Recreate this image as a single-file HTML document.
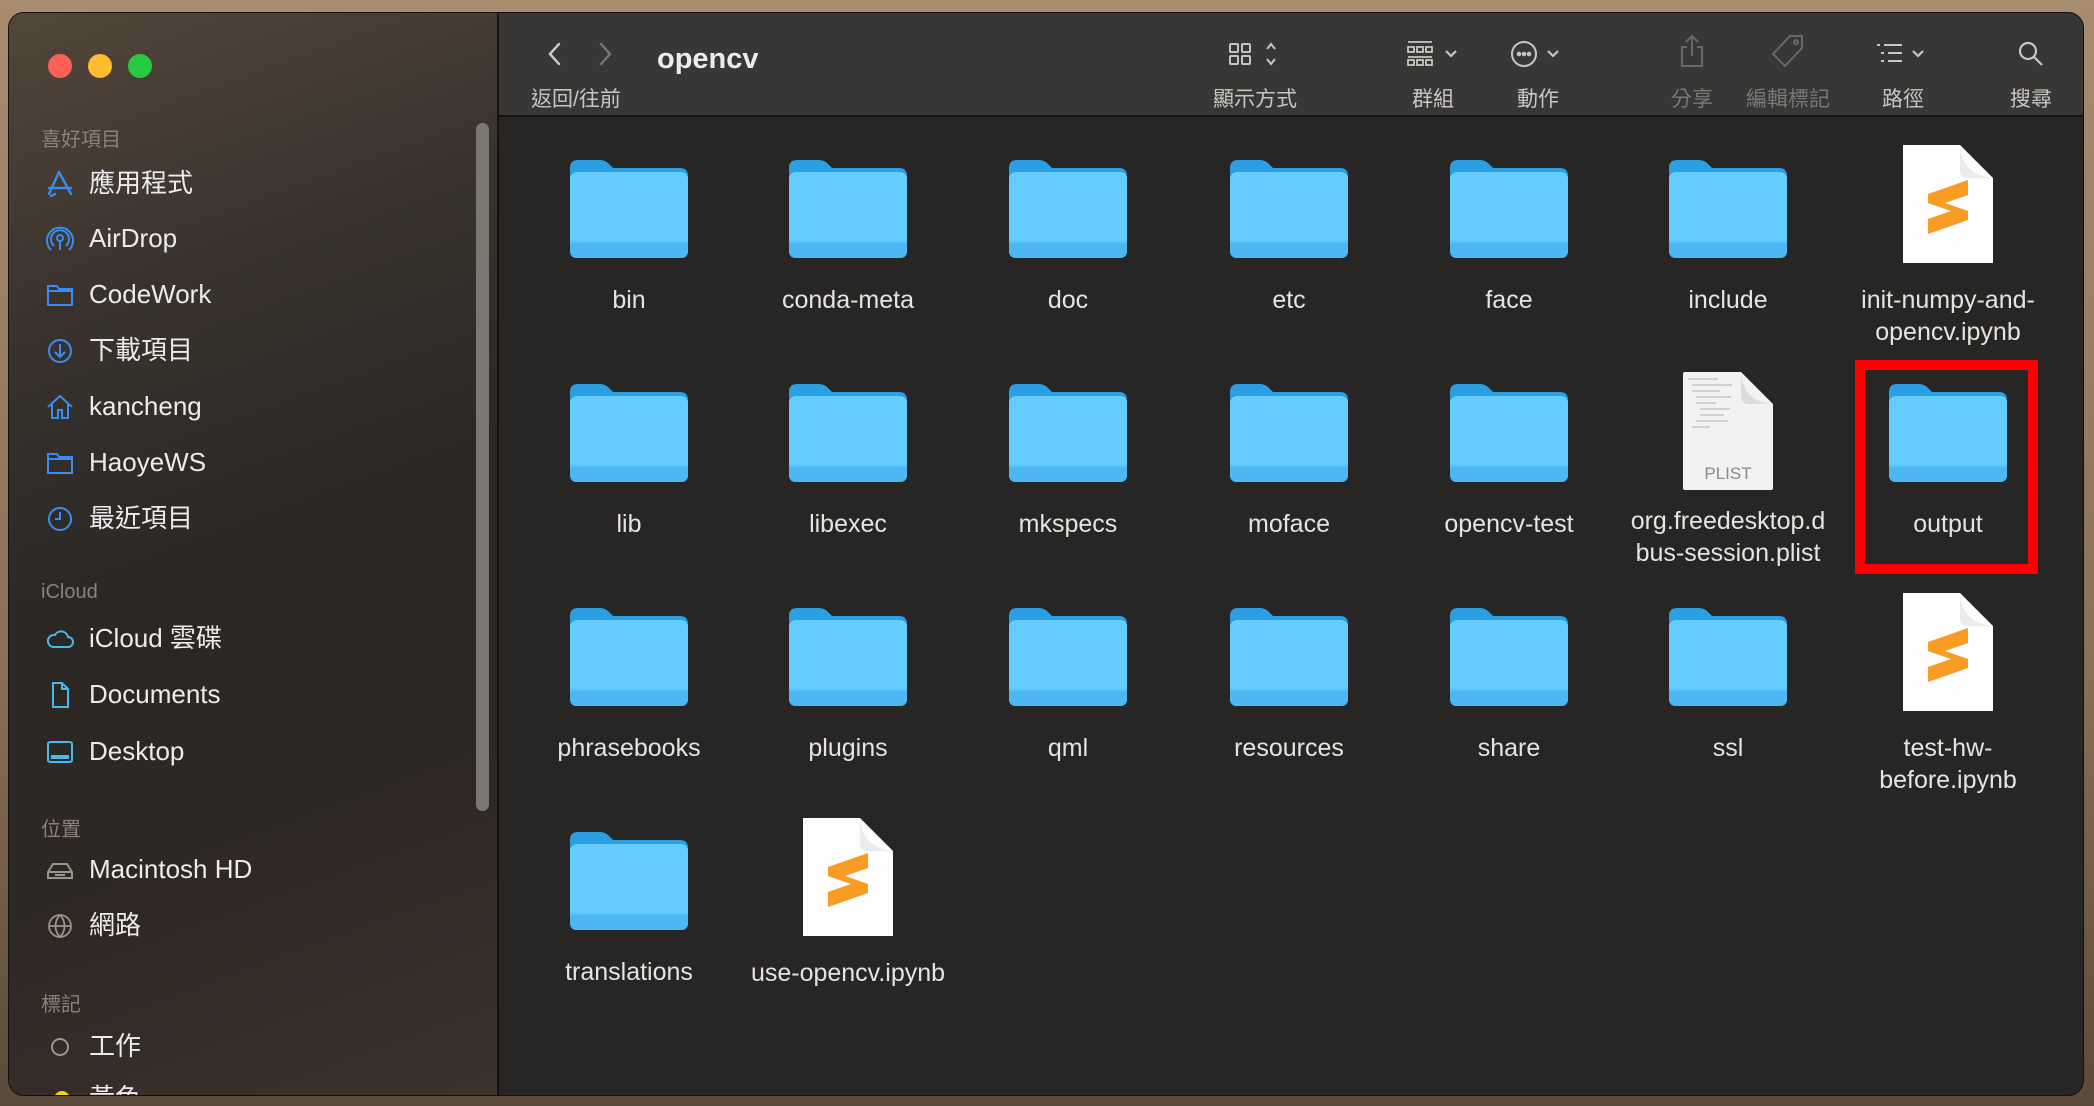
<!DOCTYPE html>
<html><head><meta charset="utf-8">
<style>
*{margin:0;padding:0;box-sizing:border-box}
html,body{width:2094px;height:1106px;overflow:hidden}
body{background:linear-gradient(180deg,#a88c70 0%,#8a7058 60%,#5a4a3a 100%);font-family:"Liberation Sans","Noto Sans CJK TC",sans-serif;position:relative}
.win{position:absolute;left:8px;top:12px;width:2076px;height:1084px;border-radius:16px;overflow:hidden;background:#282624;border:1px solid #111}
.side{position:absolute;left:0;top:0;width:490px;height:100%;background:linear-gradient(160deg,#53463a 0%,#3a332d 25%,#2a2725 50%,#2f2825 75%,#3b322b 100%);border-right:2px solid #141312}
.tl{position:absolute;top:41px;width:24px;height:24px;border-radius:50%}
.sh{position:absolute;left:32px;font-size:20px;color:#8a817a}
.it{position:absolute;left:80px;font-size:26px;color:#ececec;line-height:30px}
.ic{position:absolute;left:36px;width:30px;height:30px}
.tb{position:absolute;left:482px;top:0;right:0;height:104px}
.tbbg{position:absolute;left:490px;top:0;right:0;height:104px;background:#393735;border-bottom:2px solid #141312}
.lbl{position:absolute;top:70px;font-size:21px;color:#c8c6c4;transform:translateX(-50%);white-space:nowrap}
.dim{color:#7a7876}
.ti{position:absolute;top:26px;transform:translateX(-50%)}
.cell{position:absolute;width:240px;text-align:center;font-size:25px;color:#e6e4e2;line-height:32px}
.cell svg{display:block;margin:0 auto}
</style></head><body>
<div class="win">
 <div class="side">
  <div class="tl" style="left:39px;background:#fe5f57"></div>
  <div class="tl" style="left:79px;background:#febc2e"></div>
  <div class="tl" style="left:119px;background:#28c840"></div>
  <div style="position:absolute;left:467px;top:110px;width:13px;height:688px;border-radius:7px;background:#7b7874"></div>

  <div class="sh" style="top:110px">喜好項目</div>
  <svg class="ic" style="top:156px" viewBox="0 0 30 30" fill="none" stroke="#3a8cf0" stroke-width="2.4" stroke-linecap="round"><path d="M14 3l-10 22M14 3l12 22M4 19h22M10 25l-4 2"/></svg>
  <div class="it" style="top:155px">應用程式</div>
  <svg class="ic" style="top:211px" viewBox="0 0 30 30" fill="none" stroke="#3a8cf0" stroke-width="2"><circle cx="15" cy="14" r="3"/><path d="M9 22a9 9 0 1 1 12 0M6 26a13 13 0 1 1 18 0M15 17v9"/></svg>
  <div class="it" style="top:210px">AirDrop</div>
  <svg class="ic" style="top:267px" viewBox="0 0 30 30" fill="none" stroke="#3a8cf0" stroke-width="2"><path d="M3 6h9l2 3h13v16H3zM3 11h24"/></svg>
  <div class="it" style="top:266px">CodeWork</div>
  <svg class="ic" style="top:323px" viewBox="0 0 30 30" fill="none" stroke="#3a8cf0" stroke-width="2"><circle cx="15" cy="15" r="11"/><path d="M15 8v13M10 16l5 5 5-5"/></svg>
  <div class="it" style="top:322px">下載項目</div>
  <svg class="ic" style="top:379px" viewBox="0 0 30 30" fill="none" stroke="#3a8cf0" stroke-width="2"><path d="M3 15L15 4l12 11M7 12v14h6v-8h4v8h6V12"/></svg>
  <div class="it" style="top:378px">kancheng</div>
  <svg class="ic" style="top:435px" viewBox="0 0 30 30" fill="none" stroke="#3a8cf0" stroke-width="2"><path d="M3 6h9l2 3h13v16H3zM3 11h24"/></svg>
  <div class="it" style="top:434px">HaoyeWS</div>
  <svg class="ic" style="top:491px" viewBox="0 0 30 30" fill="none" stroke="#3a8cf0" stroke-width="2"><circle cx="15" cy="15" r="11"/><path d="M15 8v7h-5"/></svg>
  <div class="it" style="top:490px">最近項目</div>

  <div class="sh" style="top:568px">iCloud</div>
  <svg class="ic" style="top:611px" viewBox="0 0 30 30" fill="none" stroke="#4ab8e8" stroke-width="2"><path d="M8 23h15a5 5 0 0 0 0-10 7 7 0 0 0-13-2 6 6 0 0 0-2 12z"/></svg>
  <div class="it" style="top:610px">iCloud 雲碟</div>
  <svg class="ic" style="top:667px" viewBox="0 0 30 30" fill="none" stroke="#4ab8e8" stroke-width="2"><path d="M8 3h9l6 6v18H8zM17 3v6h6"/></svg>
  <div class="it" style="top:666px">Documents</div>
  <svg class="ic" style="top:724px" viewBox="0 0 30 30" fill="none" stroke="#4ab8e8" stroke-width="2"><rect x="3" y="5" width="24" height="20" rx="2"/><rect x="6" y="18" width="18" height="4" fill="#4ab8e8" stroke="none"/></svg>
  <div class="it" style="top:723px">Desktop</div>

  <div class="sh" style="top:800px">位置</div>
  <svg class="ic" style="top:842px" viewBox="0 0 30 30" fill="none" stroke="#9a948e" stroke-width="2"><path d="M3 17l5-8h14l5 8v6H3zM3 17h24M10 20h10"/></svg>
  <div class="it" style="top:841px">Macintosh HD</div>
  <svg class="ic" style="top:898px" viewBox="0 0 30 30" fill="none" stroke="#9a948e" stroke-width="1.8"><circle cx="15" cy="15" r="11"/><path d="M4 15h22M15 4c-6 6-6 16 0 22M15 4c6 6 6 16 0 22"/></svg>
  <div class="it" style="top:897px">網路</div>

  <div class="sh" style="top:975px">標記</div>
  <svg class="ic" style="top:1019px" viewBox="0 0 30 30" fill="none" stroke="#9a948e" stroke-width="2"><circle cx="15" cy="15" r="8"/></svg>
  <div class="it" style="top:1018px">工作</div>
  <div style="position:absolute;left:45px;top:1078px;width:16px;height:16px;border-radius:50%;background:#f5d020"></div>
  <div class="it" style="top:1070px">黃色</div>
 </div>

 <div class="tbbg"></div>
 <div class="tb">
  <svg style="position:absolute;left:54px;top:28px" width="20" height="26" viewBox="0 0 20 26" fill="none" stroke="#d0cecc" stroke-width="2.4" stroke-linecap="round"><path d="M14 3L5 13l9 10"/></svg>
  <svg style="position:absolute;left:104px;top:28px" width="20" height="26" viewBox="0 0 20 26" fill="none" stroke="#7a7876" stroke-width="2.4" stroke-linecap="round"><path d="M6 3l9 10-9 10"/></svg>
  <div style="position:absolute;left:166px;top:30px;font-size:29px;font-weight:bold;color:#eeeceb">opencv</div>
  <div style="position:absolute;left:40px;top:70px;font-size:21px;color:#c8c6c4">返回/往前</div>

  <svg class="ti" style="left:764px" width="56" height="30" viewBox="0 0 56 30" fill="none" stroke="#c8c6c4" stroke-width="2"><rect x="3" y="5" width="8" height="8" rx="1"/><rect x="15" y="5" width="8" height="8" rx="1"/><rect x="3" y="17" width="8" height="8" rx="1"/><rect x="15" y="17" width="8" height="8" rx="1"/><path d="M40 10l4-5 4 5M40 20l4 5 4-5"/></svg>
  <div class="lbl" style="left:764px">顯示方式</div>
  <svg class="ti" style="left:942px" width="60" height="30" viewBox="0 0 60 30" fill="none" stroke="#c8c6c4" stroke-width="1.8"><path d="M5 3h24"/><rect x="5" y="8" width="6" height="5"/><rect x="14" y="8" width="6" height="5"/><rect x="23" y="8" width="6" height="5"/><path d="M5 18h24"/><rect x="5" y="21" width="6" height="5"/><rect x="14" y="21" width="6" height="5"/><rect x="23" y="21" width="6" height="5"/><path d="M43 12l5 5 5-5" stroke-width="2.2"/></svg>
  <div class="lbl" style="left:942px">群組</div>
  <svg class="ti" style="left:1047px" width="60" height="30" viewBox="0 0 60 30" fill="none" stroke="#c8c6c4" stroke-width="2"><circle cx="16" cy="15" r="12"/><circle cx="11" cy="15" r="1.3" fill="#c8c6c4"/><circle cx="16" cy="15" r="1.3" fill="#c8c6c4"/><circle cx="21" cy="15" r="1.3" fill="#c8c6c4"/><path d="M40 12l5 5 5-5" stroke-width="2.2"/></svg>
  <div class="lbl" style="left:1047px">動作</div>
  <svg class="ti" style="left:1201px;top:20px" width="30" height="36" viewBox="0 0 30 36" fill="none" stroke="#6a6866" stroke-width="2"><path d="M15 3v20M9 9l6-6 6 6M10 14H5v19h20V14h-5"/></svg>
  <div class="lbl dim" style="left:1201px">分享</div>
  <svg class="ti" style="left:1297px;top:20px" width="36" height="36" viewBox="0 0 36 36" fill="none" stroke="#6a6866" stroke-width="2"><path d="M20 3h12v12L15 33 3 21z"/><circle cx="26" cy="9" r="2"/></svg>
  <div class="lbl dim" style="left:1297px">編輯標記</div>
  <svg class="ti" style="left:1412px" width="60" height="30" viewBox="0 0 60 30" fill="none" stroke="#c8c6c4" stroke-width="2"><path d="M4 6h3M11 6h18M8 14h3M15 14h14M8 22h3M15 22h14"/><path d="M40 12l5 5 5-5" stroke-width="2.2"/></svg>
  <div class="lbl" style="left:1412px">路徑</div>
  <svg class="ti" style="left:1540px" width="30" height="30" viewBox="0 0 30 30" fill="none" stroke="#c8c6c4" stroke-width="2.2"><circle cx="12" cy="12" r="8"/><path d="M18 18l8 8"/></svg>
  <div class="lbl" style="left:1540px">搜尋</div>
 </div>
</div>

<svg width="0" height="0" style="position:absolute">
 <defs>
  <symbol id="fold" viewBox="0 0 118 100">
   <path d="M0 10q0-8 8-8h22q5 0 9 4l4 4h67q8 0 8 8v74H0z" fill="#2a9fe3"/>
   <rect x="0" y="14" width="118" height="86" rx="7" fill="#64cdfd"/>
   <path d="M0 83h118v10q0 7-7 7H7q-7 0-7-7z" fill="#4cb8f3"/>
   <rect x="0" y="83" width="118" height="2" fill="#5cc2f7"/>
  </symbol>
  <symbol id="doc" viewBox="0 0 90 118">
   <path d="M0 0h57l33 33v85H0z" fill="#fdfdfd"/>
   <path d="M57 0q2 30 33 33H65q-8 0-8-8z" fill="#ececec"/>
   <polygon points="25,49 65,35 65,50 42,58 65,66 65,75 25,89 25,74 48,66 25,58" fill="#f99c23"/>
  </symbol>
 </defs>
</svg>

<!-- Row 1 -->
<div class="cell" style="left:509px;top:158px"><svg width="118" height="100"><use href="#fold"/></svg><div style="margin-top:26px">bin</div></div>
<div class="cell" style="left:728px;top:158px"><svg width="118" height="100"><use href="#fold"/></svg><div style="margin-top:26px">conda-meta</div></div>
<div class="cell" style="left:948px;top:158px"><svg width="118" height="100"><use href="#fold"/></svg><div style="margin-top:26px">doc</div></div>
<div class="cell" style="left:1169px;top:158px"><svg width="118" height="100"><use href="#fold"/></svg><div style="margin-top:26px">etc</div></div>
<div class="cell" style="left:1389px;top:158px"><svg width="118" height="100"><use href="#fold"/></svg><div style="margin-top:26px">face</div></div>
<div class="cell" style="left:1608px;top:158px"><svg width="118" height="100"><use href="#fold"/></svg><div style="margin-top:26px">include</div></div>
<div class="cell" style="left:1828px;top:145px"><svg width="90" height="118"><use href="#doc"/></svg><div style="margin-top:21px">init-numpy-and-<br>opencv.ipynb</div></div>

<!-- Row 2 -->
<div class="cell" style="left:509px;top:382px"><svg width="118" height="100"><use href="#fold"/></svg><div style="margin-top:26px">lib</div></div>
<div class="cell" style="left:728px;top:382px"><svg width="118" height="100"><use href="#fold"/></svg><div style="margin-top:26px">libexec</div></div>
<div class="cell" style="left:948px;top:382px"><svg width="118" height="100"><use href="#fold"/></svg><div style="margin-top:26px">mkspecs</div></div>
<div class="cell" style="left:1169px;top:382px"><svg width="118" height="100"><use href="#fold"/></svg><div style="margin-top:26px">moface</div></div>
<div class="cell" style="left:1389px;top:382px"><svg width="118" height="100"><use href="#fold"/></svg><div style="margin-top:26px">opencv-test</div></div>
<div class="cell" style="left:1608px;top:371px">
 <svg width="92" height="120" viewBox="0 0 92 120"><path d="M1 3q0-2 2-2h56l32 32v84q0 2-2 2H3q-2 0-2-2z" fill="#f2f2f2"/><path d="M59 1q2 30 32 32H67q-8 0-8-8z" fill="#dcdcdc"/><g stroke="#9a9a9a" stroke-width="0.8"><path d="M6 8h30M10 14h40M10 20h28M14 26h35M14 32h20M18 38h30M18 44h24M14 50h32M10 56h18"/></g><text x="46" y="108" text-anchor="middle" font-family="Liberation Sans" font-size="17" fill="#8a8a8a">PLIST</text></svg>
 <div style="margin-top:14px">org.freedesktop.d<br>bus-session.plist</div></div>
<div class="cell" style="left:1828px;top:382px"><svg width="118" height="100"><use href="#fold"/></svg><div style="margin-top:26px">output</div></div>
<div style="position:absolute;left:1855px;top:360px;width:183px;height:214px;border:10px solid #fe0000"></div>

<!-- Row 3 -->
<div class="cell" style="left:509px;top:606px"><svg width="118" height="100"><use href="#fold"/></svg><div style="margin-top:26px">phrasebooks</div></div>
<div class="cell" style="left:728px;top:606px"><svg width="118" height="100"><use href="#fold"/></svg><div style="margin-top:26px">plugins</div></div>
<div class="cell" style="left:948px;top:606px"><svg width="118" height="100"><use href="#fold"/></svg><div style="margin-top:26px">qml</div></div>
<div class="cell" style="left:1169px;top:606px"><svg width="118" height="100"><use href="#fold"/></svg><div style="margin-top:26px">resources</div></div>
<div class="cell" style="left:1389px;top:606px"><svg width="118" height="100"><use href="#fold"/></svg><div style="margin-top:26px">share</div></div>
<div class="cell" style="left:1608px;top:606px"><svg width="118" height="100"><use href="#fold"/></svg><div style="margin-top:26px">ssl</div></div>
<div class="cell" style="left:1828px;top:593px"><svg width="90" height="118"><use href="#doc"/></svg><div style="margin-top:21px">test-hw-<br>before.ipynb</div></div>

<!-- Row 4 -->
<div class="cell" style="left:509px;top:830px"><svg width="118" height="100"><use href="#fold"/></svg><div style="margin-top:26px">translations</div></div>
<div class="cell" style="left:728px;top:818px"><svg width="90" height="118"><use href="#doc"/></svg><div style="margin-top:21px">use-opencv.ipynb</div></div>
</body></html>
